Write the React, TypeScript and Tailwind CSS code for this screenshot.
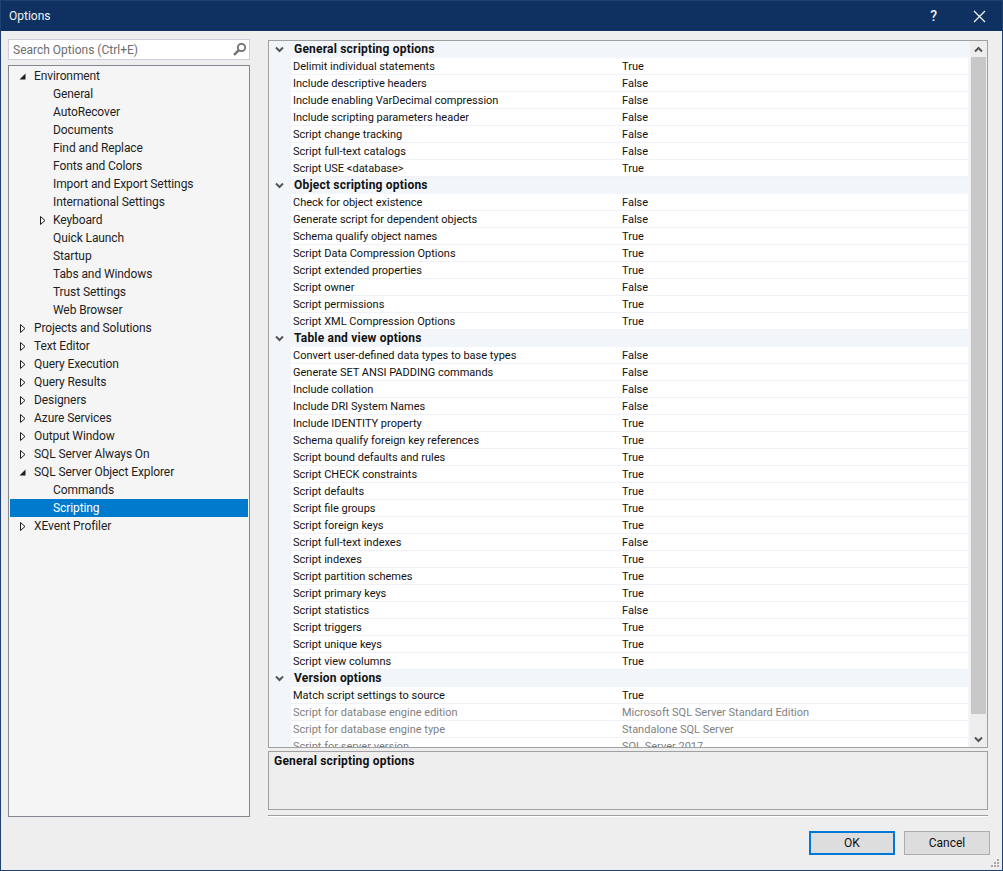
import React from "react";

type TreeItem = { label: string; depth: 0 | 1; arrow?: "open" | "closed"; selected?: boolean };
const tree: TreeItem[] = [
  { label: "Environment", depth: 0, arrow: "open" },
  { label: "General", depth: 1 },
  { label: "AutoRecover", depth: 1 },
  { label: "Documents", depth: 1 },
  { label: "Find and Replace", depth: 1 },
  { label: "Fonts and Colors", depth: 1 },
  { label: "Import and Export Settings", depth: 1 },
  { label: "International Settings", depth: 1 },
  { label: "Keyboard", depth: 1, arrow: "closed" },
  { label: "Quick Launch", depth: 1 },
  { label: "Startup", depth: 1 },
  { label: "Tabs and Windows", depth: 1 },
  { label: "Trust Settings", depth: 1 },
  { label: "Web Browser", depth: 1 },
  { label: "Projects and Solutions", depth: 0, arrow: "closed" },
  { label: "Text Editor", depth: 0, arrow: "closed" },
  { label: "Query Execution", depth: 0, arrow: "closed" },
  { label: "Query Results", depth: 0, arrow: "closed" },
  { label: "Designers", depth: 0, arrow: "closed" },
  { label: "Azure Services", depth: 0, arrow: "closed" },
  { label: "Output Window", depth: 0, arrow: "closed" },
  { label: "SQL Server Always On", depth: 0, arrow: "closed" },
  { label: "SQL Server Object Explorer", depth: 0, arrow: "open" },
  { label: "Commands", depth: 1 },
  { label: "Scripting", depth: 1, selected: true },
  { label: "XEvent Profiler", depth: 0, arrow: "closed" },
];

type Section = { title: string; rows: [string, string, boolean?][] };
const sections: Section[] = [
  {
    title: "General scripting options",
    rows: [
      ["Delimit individual statements", "True"],
      ["Include descriptive headers", "False"],
      ["Include enabling VarDecimal compression", "False"],
      ["Include scripting parameters header", "False"],
      ["Script change tracking", "False"],
      ["Script full-text catalogs", "False"],
      ["Script USE <database>", "True"],
    ],
  },
  {
    title: "Object scripting options",
    rows: [
      ["Check for object existence", "False"],
      ["Generate script for dependent objects", "False"],
      ["Schema qualify object names", "True"],
      ["Script Data Compression Options", "True"],
      ["Script extended properties", "True"],
      ["Script owner", "False"],
      ["Script permissions", "True"],
      ["Script XML Compression Options", "True"],
    ],
  },
  {
    title: "Table and view options",
    rows: [
      ["Convert user-defined data types to base types", "False"],
      ["Generate SET ANSI PADDING commands", "False"],
      ["Include collation", "False"],
      ["Include DRI System Names", "False"],
      ["Include IDENTITY property", "True"],
      ["Schema qualify foreign key references", "True"],
      ["Script bound defaults and rules", "True"],
      ["Script CHECK constraints", "True"],
      ["Script defaults", "True"],
      ["Script file groups", "True"],
      ["Script foreign keys", "True"],
      ["Script full-text indexes", "False"],
      ["Script indexes", "True"],
      ["Script partition schemes", "True"],
      ["Script primary keys", "True"],
      ["Script statistics", "False"],
      ["Script triggers", "True"],
      ["Script unique keys", "True"],
      ["Script view columns", "True"],
    ],
  },
  {
    title: "Version options",
    rows: [
      ["Match script settings to source", "True"],
      ["Script for database engine edition", "Microsoft SQL Server Standard Edition", true],
      ["Script for database engine type", "Standalone SQL Server", true],
      ["Script for server version", "SQL Server 2017", true],
    ],
  },
];

function Arrow({ kind }: { kind: "open" | "closed" }) {
  if (kind === "open") {
    return (
      <svg width="9" height="9" viewBox="0 0 9 9" className="block">
        <path d="M7.5 1.5V7.5H1.5Z" fill="#1e1e1e" />
      </svg>
    );
  }
  return (
    <svg width="9" height="11" viewBox="0 0 9 11" className="block">
      <path d="M2.5 1.5V9.5L7 5.5Z" fill="#f5f5f5" stroke="#1e1e1e" strokeWidth="1" />
    </svg>
  );
}

function Chevron({ up, color = "#555" }: { up?: boolean; color?: string }) {
  return (
    <svg width="9" height="7" viewBox="0 0 9 7" className="block">
      <path d={up ? "M1 5.5L4.5 2L8 5.5" : "M1 1.5L4.5 5L8 1.5"} fill="none" stroke={color} strokeWidth="2" />
    </svg>
  );
}

export default function App() {
  return (
    <div className="w-[1003px] h-[871px] flex flex-col bg-[#eeeeee] border border-[#1e4174] overflow-hidden text-[12px] leading-[17px] text-[#111] font-['Roboto','Open_Sans',sans-serif]">
      <div className="h-[30px] shrink-0 bg-[#0f3162] text-[#f1f1f1] flex items-center pl-2 pr-[16px]">
        <span className="flex-1 text-[12px]">Options</span>
        <span className="text-[14px] mr-[36px] font-medium">?</span>
        <svg width="13" height="13" viewBox="0 0 13 13">
          <path d="M1 1L12 12M12 1L1 12" stroke="#f1f1f1" strokeWidth="1.3" fill="none" />
        </svg>
      </div>

      <div className="flex-1 min-h-0 flex flex-col relative">
        <div className="flex-1 min-h-0 flex pt-2 pl-[7px] pr-[14px] gap-[18px]">
          <div className="w-[242px] shrink-0 flex flex-col gap-[5px]">
            <div className="h-[21px] shrink-0 bg-white border border-[#cccedb] flex items-center pl-1 pr-[2px] text-[#6d6d6d]">
              <span className="flex-1 pt-[2px]">Search Options (Ctrl+E)</span>
              <svg width="15" height="15" viewBox="0 0 15 15">
                <circle cx="9.5" cy="5.5" r="3.7" fill="none" stroke="#6f6f6f" strokeWidth="1.8" />
                <path d="M6.8 8.2L2 13" stroke="#6f6f6f" strokeWidth="2.4" />
              </svg>
            </div>
            <div className="h-[752px] shrink-0 bg-[#f5f5f5] border border-[#828790] pt-[1px] px-[1px] tracking-[-0.1px]">
              {tree.map((t) => (
                <div
                  key={t.label}
                  className={`h-[18px] flex items-center leading-[18px] ${t.selected ? "bg-[#007acc] text-white" : "text-[#1e1e1e]"}`}
                >
                  {t.depth === 0 ? (
                    <>
                      <span className="w-[8px] shrink-0" />
                      <span className="w-[16px] shrink-0">{t.arrow && <Arrow kind={t.arrow} />}</span>
                    </>
                  ) : (
                    <>
                      <span className="w-[28px] shrink-0" />
                      <span className="w-[15px] shrink-0">{t.arrow && <Arrow kind={t.arrow} />}</span>
                    </>
                  )}
                  <span>{t.label}</span>
                </div>
              ))}
            </div>
          </div>

          <div className="w-[720px] shrink-0 flex flex-col">
            <div className="h-[708px] mt-[1px] shrink-0 bg-white border border-[#a0a0a0] flex overflow-hidden text-[11px]">
              <div className="flex-1 min-w-0 overflow-hidden">
                {sections.map((s) => (
                  <div key={s.title}>
                    <div className="h-[17px] bg-[#f2f6fb] flex items-center">
                      <span className="w-[25px] pl-[6px] shrink-0">
                        <Chevron />
                      </span>
                      <span className="font-bold text-[12px] tracking-[0.2px]">{s.title}</span>
                    </div>
                    {s.rows.map(([k, v, dim]) => (
                      <div key={k} className="h-[17px] flex bg-[#f2f6fb]">
                        <div
                          className={`flex-1 flex items-center bg-white border-b border-[#f0f2f7] ml-[22px] mr-[2px] pl-[2px] ${dim ? "text-[#7f7f7f]" : "text-[#111]"}`}
                        >
                          <span className="w-[329px] shrink-0">{k}</span>
                          <span>{v}</span>
                        </div>
                      </div>
                    ))}
                  </div>
                ))}
              </div>
              <div className="w-[17px] shrink-0 bg-[#eeeeee] flex flex-col">
                <div className="h-[16px] flex items-center justify-center shrink-0">
                  <Chevron up />
                </div>
                <div className="h-[657px] mx-[1px] bg-[#c8c8c8] shrink-0" />
                <div className="flex-1 flex items-end justify-center pb-[4px]">
                  <Chevron />
                </div>
              </div>
            </div>
            <div className="h-[59px] mt-[3px] shrink-0 border border-[#a0a0a0] bg-[#eeeeee] pl-[5px] pt-[1px] font-bold text-[12px] tracking-[0.2px]">
              General scripting options
            </div>
            <div className="mt-[5px] h-[2px] shrink-0 border-t border-[#a0a0a0] bg-white" />
          </div>
        </div>

        <div className="h-[52px] shrink-0 flex justify-end items-start gap-[9px] pt-[13px] pr-[12px]">
          <button className="w-[86px] h-[24px] bg-[#dddddd] border-2 border-[#0078d7] text-[#111] flex items-center justify-center">
            OK
          </button>
          <button className="w-[86px] h-[24px] bg-[#dddddd] border border-[#adadad] text-[#111] flex items-center justify-center">
            Cancel
          </button>
        </div>
        <svg width="12" height="12" viewBox="0 0 12 12" className="absolute right-[1px] bottom-[1px]">
          <g fill="#a8a8a8">
            <rect x="8" y="2" width="2" height="2" />
            <rect x="5" y="5" width="2" height="2" />
            <rect x="8" y="5" width="2" height="2" />
            <rect x="2" y="8" width="2" height="2" />
            <rect x="5" y="8" width="2" height="2" />
            <rect x="8" y="8" width="2" height="2" />
          </g>
        </svg>
      </div>
    </div>
  );
}
